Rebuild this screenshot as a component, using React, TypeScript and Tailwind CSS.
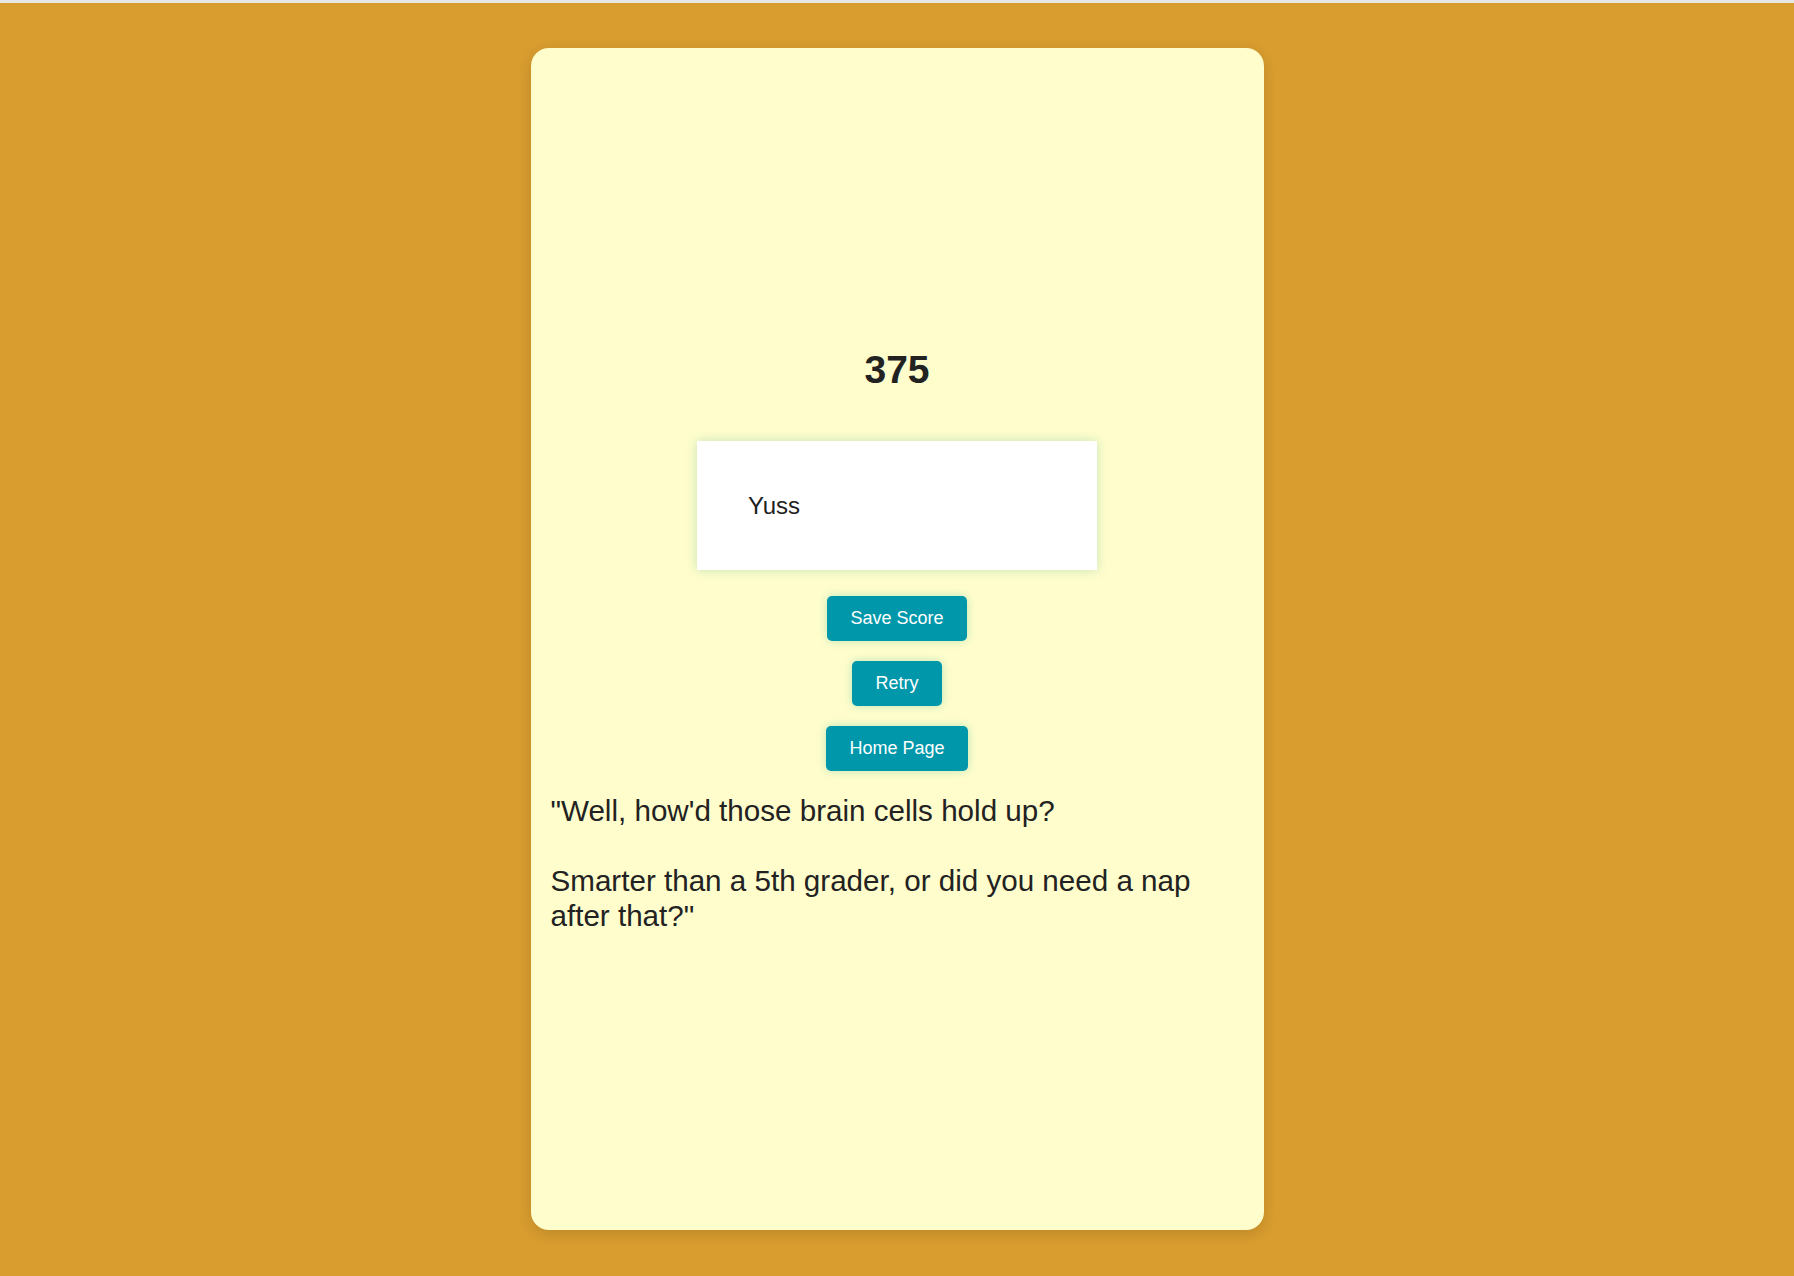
import React from 'react'

const buttons = ['Save Score', 'Retry', 'Home Page']

export default function App() {
  return (
    <div
      className="min-h-[1276px] w-full bg-[#d89c2f] border-t-[3px] border-[#e6e6e6] flex justify-center"
      style={{ fontFamily: '"Liberation Sans", Arial, Helvetica, sans-serif' }}
    >
      {/* Result card */}
      <div className="mt-[45px] w-[733px] h-[1182px] bg-[#fffdcc] rounded-[18px] shadow-[0_4px_14px_rgba(0,0,0,0.12)] px-[20px] pt-[300px] flex flex-col items-center">
        <h1 className="text-[39px] leading-[43px] font-bold text-[#222222]">375</h1>

        <div className="mt-[50px] w-[400px] h-[129px] bg-white shadow-[0_0_10px_rgba(60,170,140,0.3)] flex items-center pl-[51px]">
          <span className="text-[24px] text-[#222222]">Yuss</span>
        </div>

        <div className="mt-[26px] flex flex-col items-center gap-[20px]">
          {buttons.map((label) => (
            <button
              key={label}
              className="h-[45px] px-[23.5px] rounded-[5px] bg-[#0097aa] text-white text-[18px] leading-[21px] shadow-[0_0_8px_rgba(60,190,150,0.35)]"
            >
              {label}
            </button>
          ))}
        </div>

        <p className="mt-[22px] self-stretch text-[29.6px] leading-[35px] text-[#222222]">
          "Well, how'd those brain cells hold up?
          <br />
          <br />
          Smarter than a 5th grader, or did you need a nap after that?"
        </p>
      </div>
    </div>
  )
}
